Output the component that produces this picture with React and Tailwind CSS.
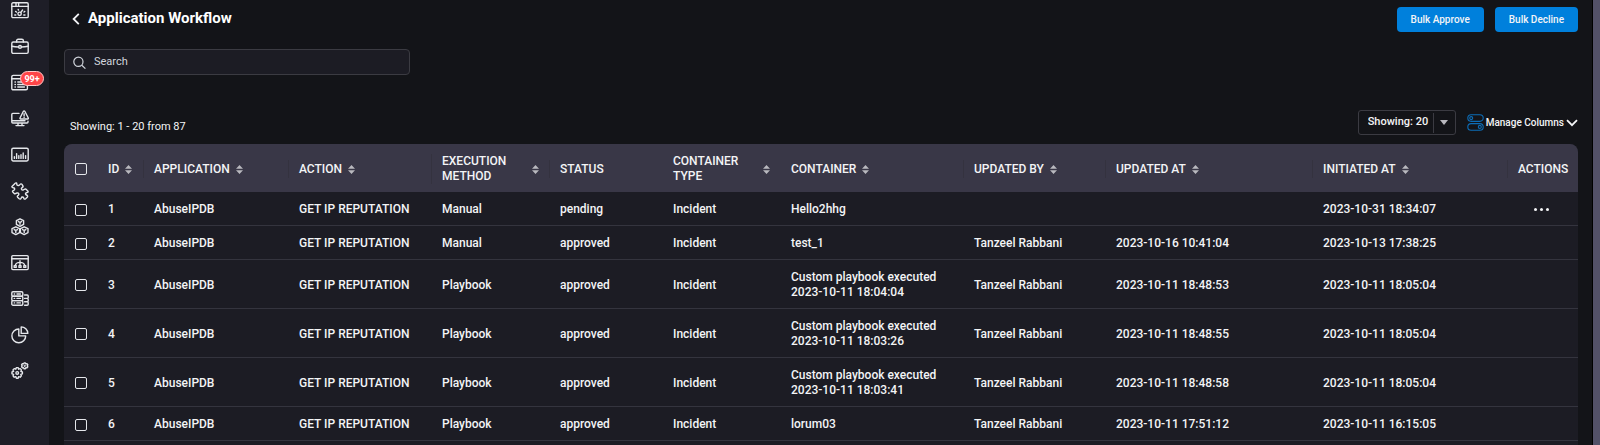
import { useState } from "react";

const iconProps = {
  width: 18,
  height: 18,
  viewBox: "0 0 18 18",
  fill: "none",
  stroke: "currentColor",
  strokeWidth: 1.4,
  strokeLinecap: "round",
  strokeLinejoin: "round",
  "aria-hidden": true,
};

const DashboardIcon = () => (
  <svg {...iconProps}>
    <rect x="0.8" y="0.8" width="16.4" height="14.8" rx="1.2" />
    <path d="M0.8 4.4H17.2M5 1V4M7.6 1V4" />
    <circle cx="8.6" cy="11.8" r="1.7" />
    <path d="M9.8 10.4L11.6 8M3.8 13H4.8M12.8 13H14M4.6 9.4L5.4 10M7.2 7.4L7.5 8.1M13.8 9.4L13 10" />
  </svg>
);

const CaseIcon = () => (
  <svg {...iconProps}>
    <rect x="0.8" y="4" width="16.4" height="11.4" rx="1.4" />
    <path d="M5.6 4V2.8C5.6 1.8 6.2 1.2 7.2 1.2H10.8C11.8 1.2 12.4 1.8 12.4 2.8V4M0.8 8.2C3 8.8 5.4 9 7.6 9M10.4 9C12.6 9 15 8.8 17.2 8.2" />
    <circle cx="9" cy="8.9" r="1.4" />
  </svg>
);

const TaskIcon = () => (
  <svg {...iconProps}>
    <rect x="0.8" y="1.4" width="15.6" height="14.4" rx="1.4" />
    <path d="M0.8 4.8H16.4M4 8H4.4M6.8 8H13.4M4 10.5H4.4M6.8 10.5H13.4M4 13H4.4M6.8 13H13.4" />
  </svg>
);

const AlertIcon = () => (
  <svg {...iconProps}>
    <path d="M8 3.4H1.8C1.2 3.4 0.8 3.8 0.8 4.4V12C0.8 12.6 1.2 13 1.8 13H16C16.6 13 17 12.6 17 12V11.2M0.8 10.8H14M7 13V15.2M11 13V15.2M5 15.6H13" />
    <path d="M12.4 1.3C12.8 0.7 13.4 0.7 13.8 1.3L17.3 8C17.5 8.5 17.2 9 16.7 9H9.6C9.1 9 8.8 8.5 9 8L12.4 1.3ZM13.1 3.8V5.8M13.1 7.3V7.4" />
  </svg>
);

const ReportIcon = () => (
  <svg {...iconProps}>
    <rect x="0.8" y="2.2" width="16.4" height="12.8" rx="1.4" />
    <path d="M3.4 12.4V10.8M5.6 12.4V7.6M7.8 12.4V9.6M10 12.4V8.8M12.2 12.4V7M14.6 12.4V9.6" />
  </svg>
);

const PuzzleIcon = () => (
  <svg {...iconProps}>
    <path d="M1 4.4L4.2 1.2C5 0.6 5.8 1 5.8 1.9C5.6 3.4 7.6 4.2 8.6 2.9C9.4 1.8 10.4 1.6 11 2.4L11.9 3.8C12.4 4.7 11.8 5.2 11.1 5.6C9.8 6.4 10.6 8.6 12.2 8C13.4 7.4 14 6.6 15 7.2L16.8 9C17.5 9.8 16.8 10.5 16 10.5C14.4 10.5 14 12.4 15.4 13C16.6 13.5 17 14.3 16.2 15.2L14.6 16.8C13.8 17.5 12.9 17 12.8 16.2C12.6 14.8 10.6 14.6 10.2 16C9.8 17.2 9 17.4 8.2 16.8L6.6 15.2C6 14.4 6.4 13.8 7.2 13.3C8.4 12.5 7.6 10.4 6 11C4.8 11.6 4 12.2 3.2 11.4L1.8 10C1.2 9.2 1.6 8.6 2.6 8.3C4.2 7.8 4 5.8 2.4 5.7C1.4 5.6 0.6 5.1 1 4.4Z" />
  </svg>
);

const CubesIcon = () => (
  <svg {...iconProps}>
    <path d="M9 0.8L12.6 2.6V6.4L9 8.4L5.4 6.4V2.6L9 0.8ZM7.4 3.6L9 4.5L10.6 3.6M9 4.5V6.2" />
    <path d="M4.8 8.8L8.6 10.6V14.6L4.8 16.6L1 14.6V10.6L4.8 8.8ZM3.2 11.6L4.8 12.5L6.4 11.6M4.8 12.5V14.4" />
    <path d="M13.2 8.8L17 10.6V14.6L13.2 16.6L9.4 14.6V10.6L13.2 8.8ZM11.6 11.6L13.2 12.5L14.8 11.6M13.2 12.5V14.4" />
  </svg>
);

const FlowIcon = () => (
  <svg {...iconProps}>
    <rect x="0.8" y="1.6" width="16.4" height="14" rx="1" />
    <path d="M0.8 4.8H17.2M9 6.8V8.4M4.2 11.4C4.8 9.2 6.6 8.4 9 8.4C11.4 8.4 13.2 9.2 13.8 11.4M9 8.4V11.4" />
    <path d="M3.2 11.6H5.2V13.4H3.2ZM8 11.6H10V13.4H8ZM12.8 11.6H14.8V13.4H12.8Z" />
  </svg>
);

const ServerIcon = () => (
  <svg {...iconProps}>
    <rect x="0.8" y="1.8" width="11" height="4.4" rx="1.2" />
    <rect x="0.8" y="6.2" width="11" height="4.4" rx="1.2" />
    <rect x="0.8" y="10.6" width="11" height="4.6" rx="1.2" />
    <path d="M3.2 4H3.6M6 4H9.4M3.2 8.4H3.6M6 8.4H9.4M3.2 12.9H3.6M6 12.9H9.4M13.6 5H16.2C16.8 5 17.2 5.4 17.2 6V7.4C17.2 8 16.8 8.4 16.2 8.4H13.6M16.2 8.4C16.8 8.4 17.2 8.8 17.2 9.4V10.8C17.2 11.4 16.8 11.8 16.2 11.8H13.6M16.2 11.8C16.8 11.8 17.2 12.2 17.2 12.8V14.2C17.2 14.8 16.8 15.2 16.2 15.2H13.6" />
  </svg>
);

const PieIcon = () => (
  <svg {...iconProps}>
    <path d="M7.8 3A6.9 6.9 0 1 0 14.7 9.9H7.8V3Z" />
    <path d="M10.2 0.9V7.4H16.8A6.6 6.6 0 0 0 10.2 0.9Z" />
  </svg>
);

const GearsIcon = () => (
  <svg {...iconProps}>
    <path d="M5.4 5.6H7.2L7.6 7.2L9.2 6.6L10.4 7.9L9.8 9.4L11.4 10V11.8L9.8 12.4L10.4 13.9L9.2 15.2L7.6 14.6L7.2 16.2H5.4L4.8 14.6L3.2 15.2L2 13.9L2.6 12.4L1 11.8V10L2.6 9.4L2 7.9L3.2 6.6L4.8 7.2L5.4 5.6Z" />
    <circle cx="6.2" cy="10.9" r="1.3" />
    <path d="M13.2 0.9H14.4L14.8 1.9L16 1.8L16.8 2.8L16.2 3.8L16.8 4.9L16 5.9L14.8 5.8L14.4 6.8H13.2L12.6 5.8L11.4 5.9L10.6 4.9L11.2 3.8L10.6 2.8L11.4 1.8L12.6 1.9L13.2 0.9Z" />
    <circle cx="13.7" cy="3.8" r="0.4" />
  </svg>
);

const navItems = [
  { label: "Dashboard", icon: DashboardIcon },
  { label: "Cases", icon: CaseIcon },
  { label: "Tasks", icon: TaskIcon, badge: "99+" },
  { label: "Alerts", icon: AlertIcon },
  { label: "Reports", icon: ReportIcon },
  { label: "Integrations", icon: PuzzleIcon },
  { label: "Assets", icon: CubesIcon },
  { label: "Workflow", icon: FlowIcon },
  { label: "Servers", icon: ServerIcon },
  { label: "Analytics", icon: PieIcon },
  { label: "Settings", icon: GearsIcon },
];

const columns = [
  { title: "ID", width: "w-[46px]", sort: true, divider: false },
  { title: "APPLICATION", width: "w-[145px]", sort: true, divider: true },
  { title: "ACTION", width: "w-[143px]", sort: true, divider: true },
  { title: "EXECUTION METHOD", width: "w-[118px]", sort: true, divider: true, wrap: true },
  { title: "STATUS", width: "w-[113px]", sort: false, divider: true },
  { title: "CONTAINER TYPE", width: "w-[118px]", sort: true, divider: false, wrap: true },
  { title: "CONTAINER", width: "w-[183px]", sort: true, divider: false },
  { title: "UPDATED BY", width: "w-[142px]", sort: true, divider: true },
  { title: "UPDATED AT", width: "w-[207px]", sort: true, divider: true },
  { title: "INITIATED AT", width: "w-[195px]", sort: true, divider: true },
  { title: "ACTIONS", width: "w-[71px]", sort: false, divider: true },
];

const rows = [
  { id: 1, method: "Manual", status: "pending", container: "Hello2hhg", by: "", updated: "", initiated: "2023-10-31 18:34:07", actions: true },
  { id: 2, method: "Manual", status: "approved", container: "test_1", by: "Tanzeel Rabbani", updated: "2023-10-16 10:41:04", initiated: "2023-10-13 17:38:25" },
  { id: 3, method: "Playbook", status: "approved", container: "Custom playbook executed 2023-10-11 18:04:04", by: "Tanzeel Rabbani", updated: "2023-10-11 18:48:53", initiated: "2023-10-11 18:05:04" },
  { id: 4, method: "Playbook", status: "approved", container: "Custom playbook executed 2023-10-11 18:03:26", by: "Tanzeel Rabbani", updated: "2023-10-11 18:48:55", initiated: "2023-10-11 18:05:04" },
  { id: 5, method: "Playbook", status: "approved", container: "Custom playbook executed 2023-10-11 18:03:41", by: "Tanzeel Rabbani", updated: "2023-10-11 18:48:58", initiated: "2023-10-11 18:05:04" },
  { id: 6, method: "Playbook", status: "approved", container: "lorum03", by: "Tanzeel Rabbani", updated: "2023-10-11 17:51:12", initiated: "2023-10-11 16:15:05" },
];

const SortIcon = () => (
  <svg width="7" height="9" viewBox="0 0 7 9" fill="#b9b9bf" className="shrink-0" aria-hidden="true">
    <path d="M3.5 0L7 3.7H0ZM3.5 9L0 5.3H7Z" />
  </svg>
);

const Checkbox = ({ label, checked, onChange }) => (
  <input
    type="checkbox"
    aria-label={label}
    checked={checked}
    onChange={onChange}
    className="block size-3 appearance-none rounded-xs border border-gray-200 checked:bg-[#0080dc]"
  />
);

const Sidebar = () => (
  <nav className="flex w-[49px] shrink-0 flex-col gap-[18px] bg-[#1e1e27] pt-0.5 pl-[11px] text-gray-200">
    {navItems.map(({ label, icon: Icon, badge }) => (
      <a key={label} href="#" aria-label={label} className="relative block size-[18px] shrink-0">
        <Icon />
        {badge && (
          <span className="absolute -top-[3px] left-[9px] flex h-[15px] w-6 items-center justify-center rounded-full border border-red-200 bg-[#ff4548] text-[9px] font-bold text-white">
            {badge}
          </span>
        )}
      </a>
    ))}
  </nav>
);

const App = () => {
  const [search, setSearch] = useState("");
  const [selected, setSelected] = useState([]);

  const toggle = (id) =>
    setSelected((prev) => (prev.includes(id) ? prev.filter((x) => x !== id) : [...prev, id]));

  const toggleAll = () =>
    setSelected(selected.length === rows.length ? [] : rows.map((r) => r.id));

  return (
    <div className="flex h-screen overflow-hidden bg-[#131418] font-['Roboto',sans-serif] text-xs text-gray-100">
      <Sidebar />

      <main className="flex min-w-0 flex-1 flex-col pr-3.5 pl-[15px]">
        {/* Title and bulk actions */}
        <header className="flex items-start justify-between pt-[7px]">
          <div className="flex h-6 items-center gap-2 pl-2">
            <button type="button" aria-label="Back">
              <svg width="8" height="12" viewBox="0 0 8 12" fill="none" stroke="currentColor" strokeWidth="1.8" aria-hidden="true">
                <path d="M6.8 0.8L1.6 6L6.8 11.2" />
              </svg>
            </button>
            <h1 className="text-[15px] font-bold text-white">Application Workflow</h1>
          </div>
          <div className="flex gap-[11px] text-[10px] font-medium">
            <button type="button" className="h-[25px] rounded-sm bg-[#0080dc] px-3.5">Bulk Approve</button>
            <button type="button" className="h-[25px] rounded-sm bg-[#0080dc] px-3.5">Bulk Decline</button>
          </div>
        </header>

        {/* Search */}
        <label className="mt-[17px] flex h-[26px] w-[346px] items-center gap-2 rounded-sm border border-[#3b3b42] bg-[#1c1c24] px-2 text-gray-300">
          <svg width="13" height="13" viewBox="0 0 13 13" fill="none" stroke="currentColor" strokeWidth="1.2" aria-hidden="true">
            <circle cx="5.4" cy="5.8" r="4.6" />
            <path d="M8.8 9.2L12.4 12.6" />
          </svg>
          <input
            type="text"
            aria-label="Search"
            placeholder="Search"
            value={search}
            onChange={(e) => setSearch(e.target.value)}
            className="min-w-0 flex-1 bg-transparent text-[11px] outline-none placeholder:text-gray-300"
          />
        </label>

        {/* Count, page size and column picker */}
        <div className="mt-[35px] flex h-[25px] items-center justify-between">
          <p className="pt-2.5 pl-1.5 text-[11px]">Showing: 1 - 20 from 87</p>
          <div className="flex items-center gap-[11px] font-medium">
            <div className="relative flex h-[25px] items-center rounded-[3px] border border-[#3b3b42]">
              <select aria-label="Rows per page" className="h-full w-24 appearance-none bg-transparent pl-[9px] text-[11px] outline-none">
                <option>Showing: 20</option>
              </select>
              <span className="pointer-events-none absolute right-0 flex h-5 w-[22px] items-center justify-center border-l border-[#3b3b42]">
                <svg width="8" height="5" viewBox="0 0 8 5" fill="#b9b9bf" aria-hidden="true">
                  <path d="M0 0H8L4 5Z" />
                </svg>
              </span>
            </div>
            <button type="button" className="flex items-center gap-0.5 text-[10px]">
              <svg width="17" height="17" viewBox="0 0 17 17" fill="none" stroke="#0d6cb5" strokeWidth="1.1" aria-hidden="true">
                <rect x="0.8" y="0.8" width="15.4" height="6.6" rx="3.3" />
                <rect x="0.8" y="9.6" width="15.4" height="6.6" rx="3.3" />
                <circle cx="4.2" cy="4.1" r="1.5" />
                <circle cx="12.8" cy="12.9" r="1.5" />
              </svg>
              Manage Columns
              <svg width="12" height="8" viewBox="0 0 12 8" fill="none" stroke="currentColor" strokeWidth="1.8" aria-hidden="true">
                <path d="M1 1.2L6 6.2L11 1.2" />
              </svg>
            </button>
          </div>
        </div>

        {/* Approvals table */}
        <div className="mt-[9px] flex-1 overflow-hidden rounded-t-lg bg-[#1c1c24]">
          <table className="w-full table-fixed text-left font-medium">
            <thead className="bg-[#393747]">
              <tr className="h-12 *:pt-0.5">
                <th className="w-[33px] pl-[11px]">
                  <Checkbox label="Select all" checked={selected.length === rows.length} onChange={toggleAll} />
                </th>
                {columns.map((col) => (
                  <th key={col.title} className={`${col.width} font-medium`}>
                    <div className={`flex min-h-[18px] items-center gap-1.5 border-l pl-2.5 leading-[15px] ${col.divider ? "border-[#34323f]" : "border-transparent"}`}>
                      <span className={col.wrap ? "w-[84px]" : "whitespace-nowrap"}>{col.title}</span>
                      {col.sort && <SortIcon />}
                    </div>
                  </th>
                ))}
              </tr>
            </thead>
            <tbody className="leading-[15px]">
              {rows.map((row) => (
                <tr key={row.id} className="border-b border-[#34343e] *:pt-2.5 *:pb-2 *:pl-[11px]">
                  <td>
                    <Checkbox label={`Select row ${row.id}`} checked={selected.includes(row.id)} onChange={() => toggle(row.id)} />
                  </td>
                  <td>{row.id}</td>
                  <td>AbuseIPDB</td>
                  <td>GET IP REPUTATION</td>
                  <td>{row.method}</td>
                  <td>{row.status}</td>
                  <td>Incident</td>
                  <td className="pr-6">{row.container}</td>
                  <td>{row.by}</td>
                  <td>{row.updated}</td>
                  <td>{row.initiated}</td>
                  <td>
                    {row.actions && (
                      <button type="button" aria-label="Row actions" className="ml-4 block">
                        <svg width="15" height="3" viewBox="0 0 15 3" fill="currentColor" aria-hidden="true">
                          <circle cx="1.5" cy="1.5" r="1.5" />
                          <circle cx="7.5" cy="1.5" r="1.5" />
                          <circle cx="13.5" cy="1.5" r="1.5" />
                        </svg>
                      </button>
                    )}
                  </td>
                </tr>
              ))}
            </tbody>
          </table>
        </div>
      </main>

      {/* Scroll track */}
      <div className="w-2 shrink-0 border-l border-black bg-[#535168]" />
    </div>
  );
};

export default App;
